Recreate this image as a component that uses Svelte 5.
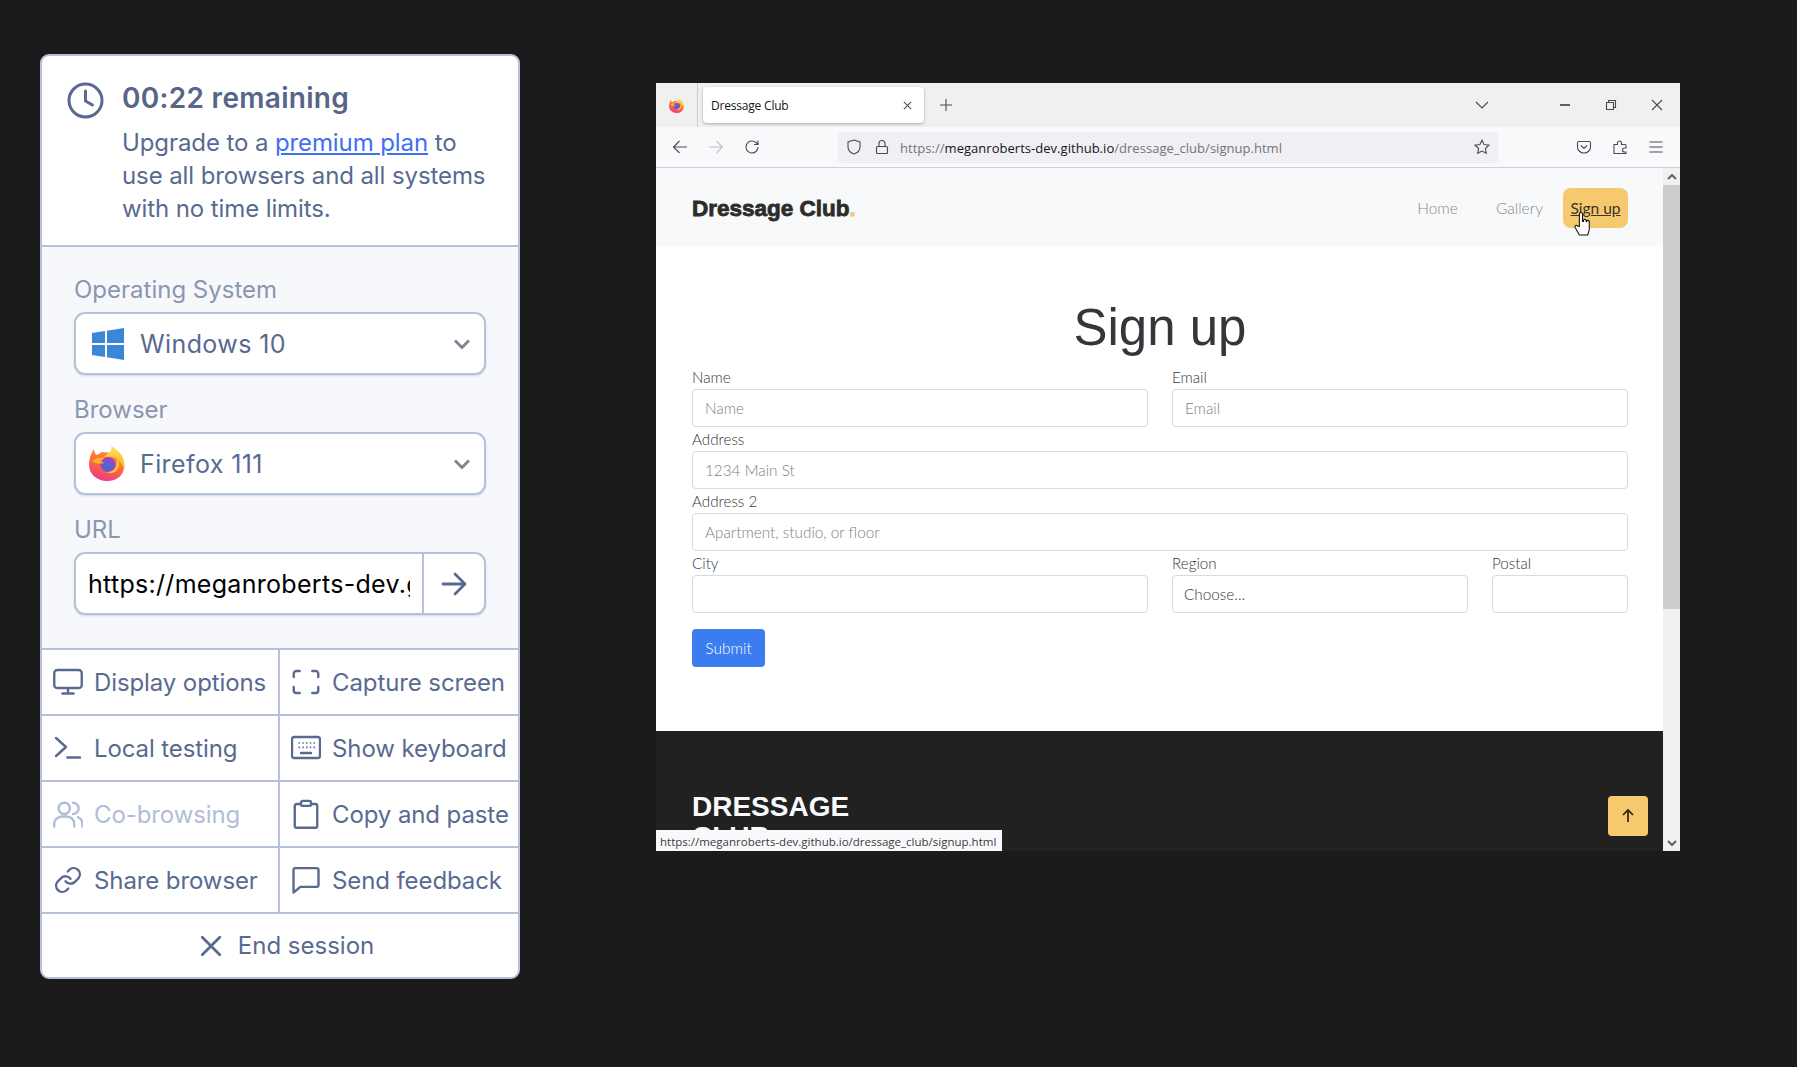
<script>
  const actions = [
    { label: 'Display options', d: 'M3.500 2.400h17a2.500 2.500 0 0 1 2.500 2.500v9.400a2.500 2.500 0 0 1-2.500 2.500h-17A2.500 2.500 0 0 1 1 14.300V4.900a2.500 2.500 0 0 1 2.500-2.500zM12 16.800v4.400M7.500 21.200h9' },
    { label: 'Capture screen', d: 'M7 3.200H4.200a2 2 0 0 0-2 2V8M17 3.200h2.800a2 2 0 0 1 2 2V8M7 20.800H4.200a2 2 0 0 1-2-2V16M17 20.800h2.800a2 2 0 0 0 2-2V16' },
    { label: 'Local testing', d: 'M2.400 4l8 7.200-8 7.200M11.500 19.600h10.100' },
    { label: 'Show keyboard', d: 'M2.500 3.200h19a1.700 1.700 0 0 1 1.700 1.700v13.400a1.700 1.700 0 0 1-1.700 1.700h-19A1.700 1.700 0 0 1 .8 18.300V4.900a1.700 1.700 0 0 1 1.700-1.700zM8 16h8', dots: true },
    { label: 'Co-browsing', d: 'M9 3a4.500 4.500 0 1 1 0 9 4.500 4.500 0 0 1 0-9zM1 22v-2a6 6 0 0 1 6-6h4a6 6 0 0 1 6 6v2M16 3a4.500 4.500 0 0 1 0 9M20 14.500a6 6 0 0 1 3.500 5.500v2', off: true },
    { label: 'Copy and paste', d: 'M8 4H4.500A1.500 1.500 0 0 0 3 5.500v16A1.500 1.500 0 0 0 4.500 23h15a1.500 1.500 0 0 0 1.500-1.500v-16A1.500 1.500 0 0 0 19.500 4H16M9.500 1.500h5A1.500 1.500 0 0 1 16 3v1.500a1 1 0 0 1-1 1H9a1 1 0 0 1-1-1V3a1.500 1.500 0 0 1 1.500-1.500z' },
    { label: 'Share browser', d: 'M10 13a5 5 0 0 0 7.500.5l3-3a5 5 0 0 0-7-7l-1.700 1.700M14 11a5 5 0 0 0-7.500-.5l-3 3a5 5 0 0 0 7 7l1.700-1.700' },
    { label: 'Send feedback', d: 'M3.500 2.500h17A1.500 1.500 0 0 1 22 4v12a1.500 1.500 0 0 1-1.500 1.500H7.500l-5.500 4.500V4A1.500 1.500 0 0 1 3.500 2.500z' }
  ];
</script>

{#snippet fox(cls)}
  <svg class={'fx ' + cls} viewBox="0 0 36 36" aria-hidden="true">
    <defs>
      <linearGradient id="foxbody" x1="0.7" y1="0" x2="0.3" y2="1">
        <stop offset="0" stop-color="#ff9a24" />
        <stop offset="0.5" stop-color="#ff6a3a" />
        <stop offset="1" stop-color="#e83a8c" />
      </linearGradient>
      <linearGradient id="foxflame" x1="0.5" y1="0" x2="0.5" y2="1">
        <stop offset="0" stop-color="#ffe35c" />
        <stop offset="1" stop-color="#ffb01f" />
      </linearGradient>
      <radialGradient id="foxcore" cx="0.5" cy="0.68" r="0.6">
        <stop offset="0.5" stop-color="#5d5fd0" />
        <stop offset="1" stop-color="#a63bd0" />
      </radialGradient>
    </defs>
    <path d="M5 4c0 3 1 5 3 6l5-3 11 1c6 3 11 8 11 14 0 8-7 14-17 14C8 36 0 29 0 20c0-6 2-12 5-16z" fill="url(#foxbody)" />
    <path d="M22 0c3 4 9 6 11.500 12 2 5 2.500 9 1.500 13-2-7-6-12-12-13-3-.5-6 0-8 1 1-3 4-4 6-6 1.500-2 2-4 1-7z" fill="url(#foxflame)" />
    <circle cx="19" cy="19.500" r="7.500" fill="url(#foxcore)" />
    <path d="M3 16c3-3 8-4 12-3-1 2-3 3-5 3 2 0 4 1 5 2-4 1-9 1-12-2z" fill="#ffb02e" />
    <path d="M28 12c3 4 3 10 0 13-2 3-7 4-11 2 5 0 9-2 10-6 1-3 1-6 1-9z" fill="#ffc233" />
  </svg>
{/snippet}

{#snippet chevron()}
  <svg class="chev" viewBox="0 0 18 12" aria-hidden="true"><path d="M2 2.500l7 7 7-7" /></svg>
{/snippet}

<div class="stage">
  <aside class="panel">
    <header class="head">
      <svg class="clock" viewBox="0 0 37 37" aria-hidden="true">
        <circle cx="18.500" cy="18.500" r="16.500" />
        <path d="M18.500 9v10l7 4" />
      </svg>
      <div>
        <h2>00:22 remaining</h2>
        <p>Upgrade to a <a href="#top">premium plan</a> to use all browsers and all systems with no time limits.</p>
      </div>
    </header>

    <section class="config">
      <div class="lab">Operating System</div>
      <div class="select">
        <svg class="fx win" viewBox="0 0 32 32" aria-hidden="true"><path fill="#3a86d8" d="M0 5l13-2v12H0zM15 2.700L32 0v15H15zM0 17h13v12L0 27zM15 17h17v15l-17-2.700z" /></svg>
        <span>Windows 10</span>
        {@render chevron()}
      </div>
      <div class="lab gap">Browser</div>
      <div class="select">
        {@render fox('foxbig')}
        <span>Firefox 111</span>
        {@render chevron()}
      </div>
      <div class="lab gap">URL</div>
      <div class="url">
        <input readonly value="https://meganroberts-dev.github.io/dressage_club/signup.html" />
        <div class="go">
          <svg viewBox="0 0 28 28" aria-hidden="true"><path d="M3 14h22M15 4l10 10-10 10" /></svg>
        </div>
      </div>
    </section>

    <div class="grid">
      {#each actions as a}
        <div class="act" class:off={a.off}>
          <svg viewBox="0 0 24 24" aria-hidden="true">
            <path d={a.d} />
            {#if a.dots}<path class="dots" d="M6 8h1.200M9 8h1.200M12 8h1.200M15 8h1.200M18 8h1.200M6 11.500h1.200M9 11.500h1.200M12 11.500h1.200M15 11.500h1.200M18 11.500h1.200" />{/if}
          </svg>
          <span>{a.label}</span>
        </div>
      {/each}
    </div>
    <div class="end">
      <svg viewBox="0 0 24 24" aria-hidden="true"><path d="M5 5l14 14M19 5L5 19" /></svg>
      <span>End session</span>
    </div>
  </aside>

  <div class="browser">
    <div class="tabs">
      <div class="foxcell">{@render fox('foxsmall')}</div>
      <div class="tab">
        <span>Dressage Club</span>
        <svg viewBox="0 0 12 12" aria-hidden="true"><path d="M2 2l8 8M10 2l-8 8" /></svg>
      </div>
      <svg class="plus" viewBox="0 0 14 14" aria-hidden="true"><path d="M7 1v12M1 7h12" /></svg>
      <div class="spacer"></div>
      <svg class="tabchev" viewBox="0 0 14 8" aria-hidden="true"><path d="M1 1l6 6 6-6" /></svg>
      <div class="winctl">
        <svg viewBox="0 0 12 12" aria-hidden="true"><path class="min" d="M1 6h10" /></svg>
        <svg viewBox="0 0 12 12" aria-hidden="true"><path d="M1.500 3.500h7v7h-7zM3.500 3.500v-2h7v7h-2" /></svg>
        <svg viewBox="0 0 12 12" aria-hidden="true"><path d="M1 1l10 10M11 1L1 11" /></svg>
      </div>
    </div>
    <div class="toolbar">
      <svg class="nav" viewBox="0 0 16 16" aria-hidden="true"><path d="M15 8H1.500M7.500 2L1.500 8l6 6" /></svg>
      <svg class="nav dim" viewBox="0 0 16 16" aria-hidden="true"><path d="M1 8h13.500M8.500 2l6 6-6 6" /></svg>
      <svg class="nav" viewBox="0 0 16 16" aria-hidden="true"><path d="M14 8a6 6 0 1 1-2-4.500L14 5.500M14 1.500v4h-4" /></svg>
      <div class="urlbar">
        <svg class="tool" viewBox="0 0 16 16" aria-hidden="true"><path d="M8 1l6 2v5c0 3.500-3 6-6 7-3-1-6-3.500-6-7V3z" /></svg>
        <svg class="tool lock" viewBox="0 0 16 16" aria-hidden="true"><path d="M3.500 7.500h9a1 1 0 0 1 1 1v5a1 1 0 0 1-1 1h-9a1 1 0 0 1-1-1v-5a1 1 0 0 1 1-1zM5 7.500V4.500a3 3 0 0 1 6 0v3" /></svg>
        <div class="addr"><span class="g">https://</span>meganroberts-dev.github.io<span class="g">/dressage_club/signup.html</span></div>
        <svg class="tool star" viewBox="0 0 16 16" aria-hidden="true"><path d="M8 1.200l2.100 4.400 4.800.6-3.500 3.300.9 4.800L8 12l-4.300 2.300.9-4.800L1.100 6.200l4.800-.6z" /></svg>
      </div>
      <div class="tools">
        <svg class="tool" viewBox="0 0 16 16" aria-hidden="true"><path d="M2.500 2.500h11a1 1 0 0 1 1 1V8a6.500 6 0 0 1-13 0V3.500a1 1 0 0 1 1-1zM5 6.500l3 3 3-3" /></svg>
        <svg class="tool" viewBox="0 0 16 16" aria-hidden="true"><path d="M2 5.500h3.500V4a2 2 0 0 1 4 0v1.500H13a1 1 0 0 1 1 1V9h-1.500a2 2 0 0 0 0 4H14v1.500H2z" /></svg>
        <svg class="tool" viewBox="0 0 16 16" aria-hidden="true"><path d="M1.500 3h13M1.500 8h13M1.500 13h13" /></svg>
      </div>
    </div>
    <div class="viewport">
      <div class="page">
        <nav class="topnav">
          <div class="logo">Dressage Club<span>.</span></div>
          <div class="links">
            <span class="link">Home</span>
            <span class="link">Gallery</span>
            <span class="link on">Sign up</span>
          </div>
        </nav>
        <main class="main">
          <h1>Sign up</h1>
          <form class="form">
            <label>Name<input placeholder="Name" /></label>
            <label>Email<input placeholder="Email" /></label>
            <label class="wide">Address<input placeholder="1234 Main St" /></label>
            <label class="wide">Address 2<input placeholder="Apartment, studio, or floor" /></label>
            <label>City<input /></label>
            <div class="pair">
              <label>Region<div class="choose">Choose...</div></label>
              <label>Postal<input /></label>
            </div>
          </form>
          <div class="submit">Submit</div>
        </main>
        <footer class="foot">
          <div class="brand">DRESSAGE CLUB</div>
        </footer>
        <div class="toTop">
          <svg viewBox="0 0 16 16" aria-hidden="true"><path d="M8 14V2.500M3 7l5-5 5 5" /></svg>
        </div>
      </div>
      <div class="scroll">
        <svg class="sa" viewBox="0 0 10 6" aria-hidden="true"><path d="M1 5l4-4 4 4" /></svg>
        <div class="thumb"></div>
        <div class="track"></div>
        <svg class="sa" viewBox="0 0 10 6" aria-hidden="true"><path d="M1 1l4 4 4-4" /></svg>
      </div>
    </div>
    <div class="status">https://meganroberts-dev.github.io/dressage_club/signup.html</div>
    <svg class="fx hand" viewBox="0 0 18 24" aria-hidden="true">
      <path fill="#fff" stroke="#111" d="M6 2a1.500 1.500 0 0 1 3 0v7h1V8a1.300 1.300 0 0 1 2.500 0v1h.5V9a1.300 1.300 0 0 1 2.500 0v8l-1.500 5H6l-4-7c-1-2 1-3 2.500-1.500L6 14z" />
    </svg>
  </div>
</div>

<style>
  :global(body) {
    background: #1b1b1b;
    font-family: Inter, "Noto Sans", sans-serif;
  }
  .stage {
    display: flex;
    align-items: flex-start;
    padding: 54px 0 0 40px;
    height: 1013px;
    overflow: hidden;
  }
  svg { display: block; flex: none; }
  svg:not(.fx) path { fill: none; }

  /* left panel */
  .panel {
    width: 480px;
    flex: none;
    box-sizing: border-box;
    border: 2px solid #b6c2dc;
    border-radius: 9px;
    background: #fff;
    color: #596a91;
    overflow: hidden;
  }
  .head {
    display: flex;
    gap: 18px;
    padding: 22px 24px 20px 25px;
    height: 189px;
    box-sizing: border-box;
  }
  .clock { width: 37px; height: 37px; margin-top: 4px; }
  .clock circle, .clock path { fill: none; stroke: #596a91; stroke-width: 3; stroke-linecap: round; stroke-linejoin: round; }
  .head h2 { margin: 0 0 8px; font-size: 28px; line-height: 40px; font-weight: 600; letter-spacing: 0.3px; color: #566588; }
  .head p { margin: 0; font-size: 24px; line-height: 33px; letter-spacing: -0.1px; color: #596a91; }
  .head a { color: #3f6ff5; }
  .config {
    background: #f6f8fc;
    border-top: 2px solid #b6c2dc;
    padding: 29px 32px 33px 32px;
  }
  .lab { font-size: 24px; line-height: 28px; color: #8b96b0; margin-bottom: 8px; }
  .gap { margin-top: 21px; }
  .select {
    display: flex;
    align-items: center;
    height: 63px;
    box-sizing: border-box;
    background: #fff;
    border: 2px solid #b6c2dc;
    border-radius: 11px;
    box-shadow: 0 1px 2px rgba(100, 116, 160, 0.25);
    font-size: 25px;
    letter-spacing: 0.4px;
    padding: 0 13px 0 15px;
    color: #596a91;
  }
  .select span { flex: 1; margin-left: 17px; }
  .win { width: 32px; height: 32px; margin-left: 1px; margin-right: -1px; }
  .foxbig { width: 36px; height: 36px; margin-left: -2px; margin-right: -2px; margin-top: -2px; }
  .foxsmall { width: 15px; height: 15px; }
  .chev { width: 18px; height: 12px; }
  .chev path { stroke: #7e8798; stroke-width: 3; }
  .url {
    display: flex;
    height: 63px;
    box-sizing: border-box;
    background: #fff;
    border: 2px solid #b6c2dc;
    border-radius: 11px;
    box-shadow: 0 1px 2px rgba(100, 116, 160, 0.25);
  }
  .url input {
    flex: 1;
    min-width: 0;
    border: 0;
    outline: 0;
    background: none;
    margin: 0 12px;
    padding: 0;
    font: 25px Inter, sans-serif;
    letter-spacing: 0.3px;
    color: #000;
  }
  .go { width: 60px; flex: none; border-left: 2px solid #b6c2dc; display: flex; align-items: center; justify-content: center; }
  .go svg { width: 28px; height: 28px; }
  .go path { stroke: #596a91; stroke-width: 2.800; stroke-linecap: round; stroke-linejoin: round; }
  .grid { display: grid; grid-template-columns: 238px 1fr; }
  .act {
    display: flex;
    align-items: center;
    gap: 11px;
    height: 64px;
    padding-left: 11px;
    border-top: 2px solid #b6c2dc;
    font-size: 24px;
    letter-spacing: -0.1px;
    white-space: nowrap;
  }
  .act:nth-child(odd) { border-right: 2px solid #b6c2dc; }
  .act svg { width: 30px; height: 30px; }
  .act path { stroke: #596a91; stroke-width: 1.900; stroke-linecap: round; stroke-linejoin: round; }
  .act path.dots { stroke-width: 1.300; stroke-linecap: butt; }
  .act.off { color: #b1bdd8; }
  .act.off path { stroke: #b1bdd8; }
  .end {
    display: flex;
    align-items: center;
    justify-content: center;
    gap: 12px;
    height: 63px;
    padding-left: 10px;
    border-top: 2px solid #b6c2dc;
    font-size: 24px;
  }
  .end svg { width: 30px; height: 30px; }
  .end path { stroke: #596a91; stroke-width: 2.200; stroke-linecap: round; }

  /* browser window */
  .browser {
    position: relative;
    margin: 29px 0 0 136px;
    width: 1024px;
    height: 768px;
    flex: none;
    display: flex;
    flex-direction: column;
    overflow: hidden;
    background: #fff;
    font-family: "Open Sans", sans-serif;
  }
  .tabs {
    display: flex;
    align-items: center;
    height: 44px;
    background: #f0f0f1;
    flex: none;
  }
  .foxcell { width: 42px; height: 44px; box-sizing: border-box; display: flex; align-items: center; justify-content: center; border-right: 1px solid #c9c9cf; padding-right: 1px; }
  .tab {
    margin-left: 5px;
    width: 221px;
    height: 36px;
    box-sizing: border-box;
    display: flex;
    align-items: center;
    justify-content: space-between;
    padding: 0 11px 0 8px;
    background: #fff;
    border-radius: 4px;
    box-shadow: 0 1px 3px rgba(0, 0, 0, 0.3);
    font-size: 12px;
    letter-spacing: -0.2px;
    color: #15141a;
  }
  .tab svg { width: 11px; height: 11px; }
  .tab path, .plus path, .tabchev path, .winctl path, .nav path, .tool path { stroke: #4a4a52; stroke-width: 1.100; }
  .winctl path.min { stroke: #111; stroke-width: 1.300; }
  .plus { width: 14px; height: 14px; margin-left: 15px; }
  .spacer { flex: 1; }
  .tabchev { width: 14px; height: 8px; margin-right: 70px; }
  .winctl { display: flex; gap: 34px; margin-right: 17px; }
  .winctl svg { width: 12px; height: 12px; }
  .toolbar {
    display: flex;
    align-items: center;
    height: 41px;
    box-sizing: border-box;
    background: #f9f9fb;
    border-bottom: 1px solid #cfcfd8;
    padding-left: 16px;
    flex: none;
  }
  .nav { width: 16px; height: 16px; margin-right: 20px; }
  .nav.dim path { stroke: #c0c0c6; }
  .urlbar {
    display: flex;
    align-items: center;
    width: 660px;
    height: 31px;
    margin-left: 58px;
    background: #f0f0f4;
    border-radius: 4px;
    padding: 0 8px;
    box-sizing: border-box;
    font-size: 13px;
    color: #15141a;
  }
  .tool { width: 16px; height: 16px; }
  .lock { margin-left: 12px; }
  .addr { flex: 1; margin-left: 10px; padding-top: 1px; letter-spacing: 0.03px; white-space: nowrap; }
  .g { color: #73737c; }
  .tools { display: flex; gap: 20px; margin-left: 78px; }
  .viewport { flex: 1; display: flex; min-height: 0; }
  .page { position: relative; flex: 1; min-width: 0; overflow: hidden; font-family: Lato, sans-serif; }
  .topnav {
    height: 79px;
    background: #f8f9fa;
    display: flex;
    align-items: center;
    justify-content: space-between;
    padding: 0 35px 0 36px;
    box-sizing: border-box;
  }
  .logo {
    font: bold 22.500px "Liberation Sans", Arial, sans-serif;
    -webkit-text-stroke: 0.8px #2c2c2c;
    color: #2c2c2c;
    padding-top: 2px;
  }
  .logo span { color: #f7c96e; -webkit-text-stroke: 0.8px #f7c96e; }
  .links { display: flex; align-items: center; gap: 21px; font-size: 15.500px; color: #8a8a8a; }
  .link { height: 40px; display: flex; align-items: center; padding: 0 8px; border-radius: 8px; font-weight: 300; }
  .link:nth-child(2) { margin-left: 1px; margin-right: -1px; }
  .on { background: #f7c96e; color: #3a3420; text-decoration: underline; margin-left: -8px; padding: 0 7.500px; font-weight: 400; }
  .main { height: 484px; box-sizing: border-box; padding: 52px 35px 0 36px; color: #212529; }
  h1 { margin: 0 0 8px; font: 400 51px/58px "Liberation Sans", Arial, sans-serif; text-align: center; color: #33373b; }
  .form { display: grid; grid-template-columns: 1fr 1fr; column-gap: 24px; }
  .form label { display: block; font-size: 15.200px; line-height: 24px; color: #33373b; font-weight: 300; }
  .wide { grid-column: 1 / -1; }
  .pair { display: grid; grid-template-columns: 1fr 136px; column-gap: 24px; }
  .form input, .choose {
    display: block;
    box-sizing: border-box;
    width: 100%;
    height: 38px;
    border: 1px solid #d8dadd;
    border-radius: 4px;
    background: #fff;
    padding: 0 12px;
    font: 300 15.300px Lato, sans-serif;
    line-height: 36px;
    color: #3c4044;
    outline: 0;
  }
  .choose { padding-left: 11px; color: #33373b; }
  .form input::placeholder { color: #7b8085; opacity: 1; }
  .submit {
    margin-top: 16px;
    width: 73px;
    height: 38px;
    line-height: 38px;
    text-align: center;
    background: #3b7cf0;
    border-radius: 4px;
    color: #fff;
    font-size: 15.500px;
    font-weight: 300;
  }
  .foot { height: 200px; background: #212121; padding: 61px 0 0 36px; box-sizing: border-box; }
  .brand { width: 200px; font: bold 28px/30px "Liberation Sans", Arial, sans-serif; color: #f8f9fa; }
  .toTop {
    position: absolute;
    left: 952px;
    top: 628px;
    width: 40px;
    height: 40px;
    background: #f7c96e;
    border-radius: 4px;
    display: flex;
    align-items: center;
    justify-content: center;
  }
  .toTop svg { width: 16px; height: 16px; }
  .toTop path { stroke: #2c2410; stroke-width: 1.700; }
  .scroll { width: 17px; flex: none; background: #f0f0f0; display: flex; flex-direction: column; align-items: center; }
  .sa { width: 10px; height: 6px; margin: 6px 0 5px; }
  .sa path { stroke: #606060; stroke-width: 2; }
  .thumb { width: 17px; height: 424px; background: #cdcdcd; }
  .track { flex: 1; }
  .status {
    position: absolute;
    left: 0;
    bottom: 0;
    width: 346px;
    height: 21px;
    box-sizing: border-box;
    padding-left: 4px;
    background: #f9f9fb;
    font-size: 11.500px;
    line-height: 23px;
    color: #3a3a42;
    white-space: nowrap;
  }
  .hand { position: absolute; left: 917px; top: 129px; width: 19px; height: 25px; }
</style>
